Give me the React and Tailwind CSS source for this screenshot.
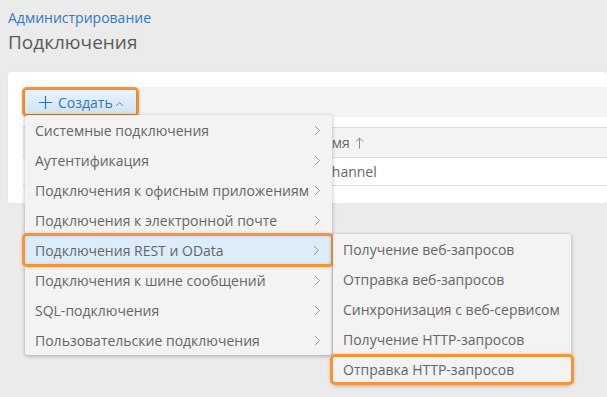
import React from "react";

const mainItems = [
  "Системные подключения",
  "Аутентификация",
  "Подключения к офисным приложениям",
  "Подключения к электронной почте",
  "Подключения REST и OData",
  "Подключения к шине сообщений",
  "SQL-подключения",
  "Пользовательские подключения",
];

const subItems = [
  "Получение веб-запросов",
  "Отправка веб-запросов",
  "Синхронизация с веб-сервисом",
  "Получение HTTP-запросов",
];

function Chevron({ color = "#9a9a9a" }) {
  return (
    <svg width="7" height="11" viewBox="0 0 7 11" fill="none">
      <path d="M1 1l4.5 4.5L1 10" stroke={color} strokeWidth="1" />
    </svg>
  );
}

export default function App() {
  return (
    <div
      className="relative w-[607px] h-[397px] overflow-hidden bg-[#ebebeb] text-[#666]"
      style={{ fontFamily: '"Open Sans", "Noto Sans", sans-serif' }}
    >
      <div className="pl-[8px] pt-[9px]">
        <div className="text-[14px] leading-[18px] text-[#3479c0]">Администрирование</div>
        <div className="text-[19px] leading-[24px] mt-[3px] text-[#5a5a5a]">Подключения</div>
      </div>

      <div className="ml-[8px] mt-[18px] bg-white rounded-[3px] pt-[15px] pb-[17px] pl-[15px] shadow-[0_0_2px_rgba(0,0,0,0.05)]">
        <div className="h-[30px] bg-[#f3f3f3]" />
        <div className="mt-[10px] border-t border-b border-[#dcdcdc] h-[31px] bg-[#f4f4f4] flex items-center pl-[298px] text-[14px] text-[#6a6a6a]">
          Имя
          <svg width="9" height="12" viewBox="0 0 9 12" className="ml-[5px]" fill="none">
            <path d="M4.5 11.5V1M0.8 4.7L4.5 1l3.7 3.7" stroke="#8a8a8a" strokeWidth="1" />
          </svg>
        </div>
        <div className="border-b border-[#dcdcdc] h-[28px] flex items-center pl-[300px] text-[14px] text-[#666]">
          Channel
        </div>
      </div>

      {/* Create button */}
      <div className="absolute left-[22px] top-[87px] w-[117px] h-[30px] rounded-[5px] border-[3px] border-[#f7943a] shadow-[0_0_3px_rgba(247,148,58,0.5)]">
        <div className="w-full h-full rounded-[2px] bg-gradient-to-b from-[#e9f3fb] to-[#cfe3f3] shadow-[0_1px_3px_rgba(0,0,0,0.25)] flex items-center pl-[14px] text-[#2f77bd] text-[14px]">
          <svg width="13" height="13" viewBox="0 0 13 13" className="mr-[6px]">
            <path d="M6.5 0v13M0 6.5h13" stroke="#2f77bd" strokeWidth="1.2" />
          </svg>
          <span>Создать</span>
          <svg width="9" height="6" viewBox="0 0 9 6" className="ml-[2px] mt-[3px]">
            <path d="M1 5l3.5-3.5L8 5" stroke="#5a8fc7" strokeWidth="1" fill="none" />
          </svg>
        </div>
      </div>

      {/* Main menu */}
      <div className="absolute left-[25px] top-[115px] w-[307px] bg-[#f3f3f3] rounded-[3px] shadow-[0_1px_4px_rgba(0,0,0,0.3)] flex flex-col">
        {mainItems.map((t) => (
          <div key={t} className="h-[30px] flex items-center justify-between pl-[10px] pr-[11px] text-[14px] text-[#666] whitespace-nowrap">
            <span>{t}</span>
            <Chevron />
          </div>
        ))}
      </div>

      {/* Highlighted main item */}
      <div className="absolute left-[22px] top-[233px] w-[312px] h-[34px] rounded-[5px] border-[3px] border-[#f7943a] shadow-[0_0_3px_rgba(247,148,58,0.5)]">
        <div className="w-full h-full rounded-[2px] bg-[#dcecf9] shadow-[inset_0_0_3px_rgba(0,0,0,0.15)] flex items-center justify-between pl-[10px] pr-[11px] text-[14px] text-[#666]">
          <span>Подключения REST и OData</span>
          <Chevron color="#6a9bd0" />
        </div>
      </div>

      {/* Submenu */}
      <div className="absolute left-[333px] top-[234px] w-[238px] bg-[#f3f3f3] rounded-[3px] shadow-[0_1px_4px_rgba(0,0,0,0.3)] flex flex-col">
        {subItems.map((t) => (
          <div key={t} className="h-[30px] flex items-center pl-[10px] text-[14px] text-[#666] whitespace-nowrap">
            {t}
          </div>
        ))}
        <div className="h-[30px]" />
      </div>

      {/* Highlighted sub item */}
      <div className="absolute left-[330px] top-[354px] w-[244px] h-[31px] rounded-[5px] border-[3px] border-[#f7943a] shadow-[0_0_3px_rgba(247,148,58,0.5)]">
        <div className="w-full h-full flex items-center pl-[10px] text-[14px] text-[#666] whitespace-nowrap">
          Отправка HTTP-запросов
        </div>
      </div>
    </div>
  );
}
